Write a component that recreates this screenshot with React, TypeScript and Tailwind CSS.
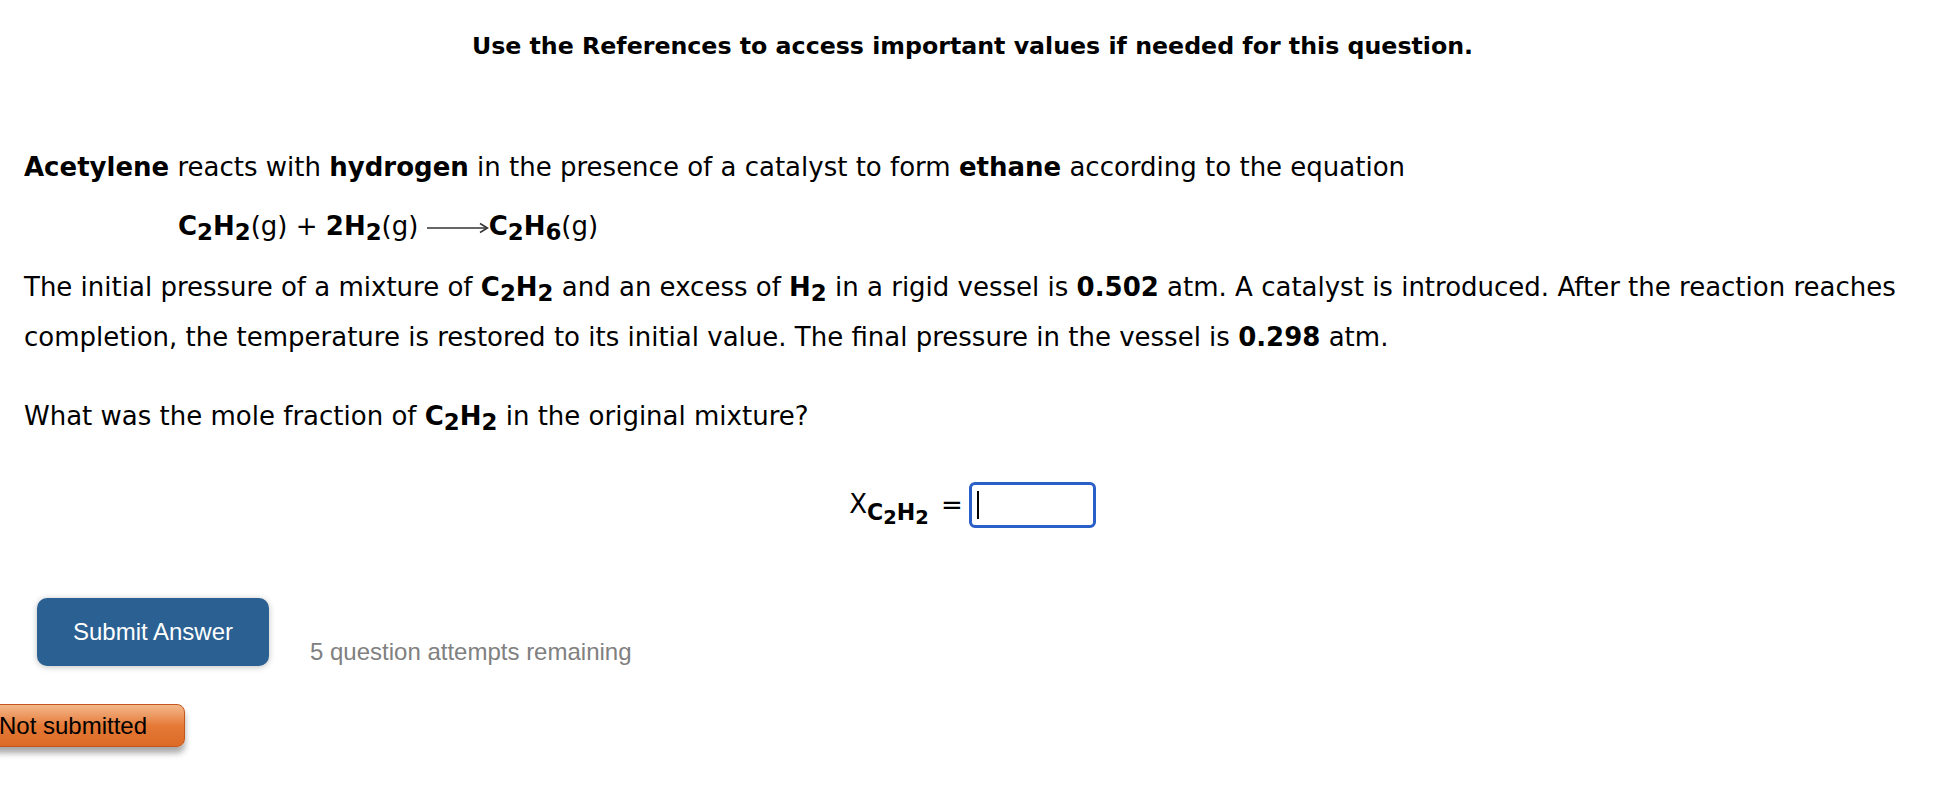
import React from 'react';

const Sub: React.FC<{ children: React.ReactNode }> = ({ children }) => (
  <sub className="relative top-[0.2em] align-baseline text-[0.88em]">{children}</sub>
);

const Arrow = () => (
  <svg width="62" height="14" viewBox="0 0 62 14" className="inline-block align-middle">
    <line x1="0" y1="7" x2="60" y2="7" stroke="#333" strokeWidth="1.5" />
    <polyline points="53,2.5 60.5,7 53,11.5" fill="none" stroke="#333" strokeWidth="1.5" />
  </svg>
);

export default function App() {
  return (
    <div className="min-h-[798px] bg-white text-black" style={{ fontFamily: '"DejaVu Sans", Verdana, sans-serif' }}>
      <div className="pt-[31px] text-center text-[23.7px] font-bold leading-[30px]">
        Use the References to access important values if needed for this question.
      </div>

      <div className="px-6 text-[26px] leading-[50px]">
        <p className="mt-[81px]">
          <b>Acetylene</b> reacts with <b>hydrogen</b> in the presence of a catalyst to form <b>ethane</b> according
          to the equation
        </p>
        <p className="mt-[9px] pl-[154px]">
          <b>
            C<Sub>2</Sub>H<Sub>2</Sub>
          </b>
          (g) + <b>2H<Sub>2</Sub></b>(g) <Arrow />
          <b>
            C<Sub>2</Sub>H<Sub>6</Sub>
          </b>
          (g)
        </p>
        <p className="mt-[11px]">
          The initial pressure of a mixture of{' '}
          <b>
            C<Sub>2</Sub>H<Sub>2</Sub>
          </b>{' '}
          and an excess of{' '}
          <b>
            H<Sub>2</Sub>
          </b>{' '}
          in a rigid vessel is <b>0.502</b> atm. A catalyst is introduced. After the reaction reaches completion, the
          temperature is restored to its initial value. The final pressure in the vessel is <b>0.298</b> atm.
        </p>
        <p className="mt-[29px]">
          What was the mole fraction of{' '}
          <b>
            C<Sub>2</Sub>H<Sub>2</Sub>
          </b>{' '}
          in the original mixture?
        </p>

        <div className="mt-[38px] flex items-center justify-center">
          <span className="text-[26px]">
            X
            <b className="relative top-[0.3em] text-[0.85em]">
              C<Sub>2</Sub>H<Sub>2</Sub>
            </b>
          </span>
          <span className="ml-3 mr-[6px] text-[26px]">=</span>
          <div className="flex h-[46px] w-[127px] items-center rounded-[6px] border-[3px] border-[#2a5fc8] px-[5px]">
            <div className="h-[28px] w-[2px] bg-black" />
          </div>
        </div>
      </div>

      <div className="mt-[68px] flex items-end pl-[37px]" style={{ fontFamily: '"Liberation Sans", Arial, sans-serif' }}>
        <button className="h-[68px] w-[232px] rounded-[10px] bg-[#2a6092] text-[24px] text-white shadow-[0_1px_6px_rgba(0,0,0,0.25)]">
          Submit Answer
        </button>
        <span className="mb-[-4px] ml-[41px] text-[24px] text-[#808080]">5 question attempts remaining</span>
      </div>

      <div className="mt-[38px]" style={{ fontFamily: '"Liberation Sans", Arial, sans-serif' }}>
        <div className="ml-[-12px] inline-flex h-[43px] w-[197px] items-center rounded-[8px] border border-[#c4561c] bg-gradient-to-b from-[#f3b88a] via-[#e57a36] to-[#dc6a26] pl-[10px] text-[24px] text-black shadow-[0_6px_6px_rgba(0,0,0,0.35)]">
          Not submitted
        </div>
      </div>
    </div>
  );
}
